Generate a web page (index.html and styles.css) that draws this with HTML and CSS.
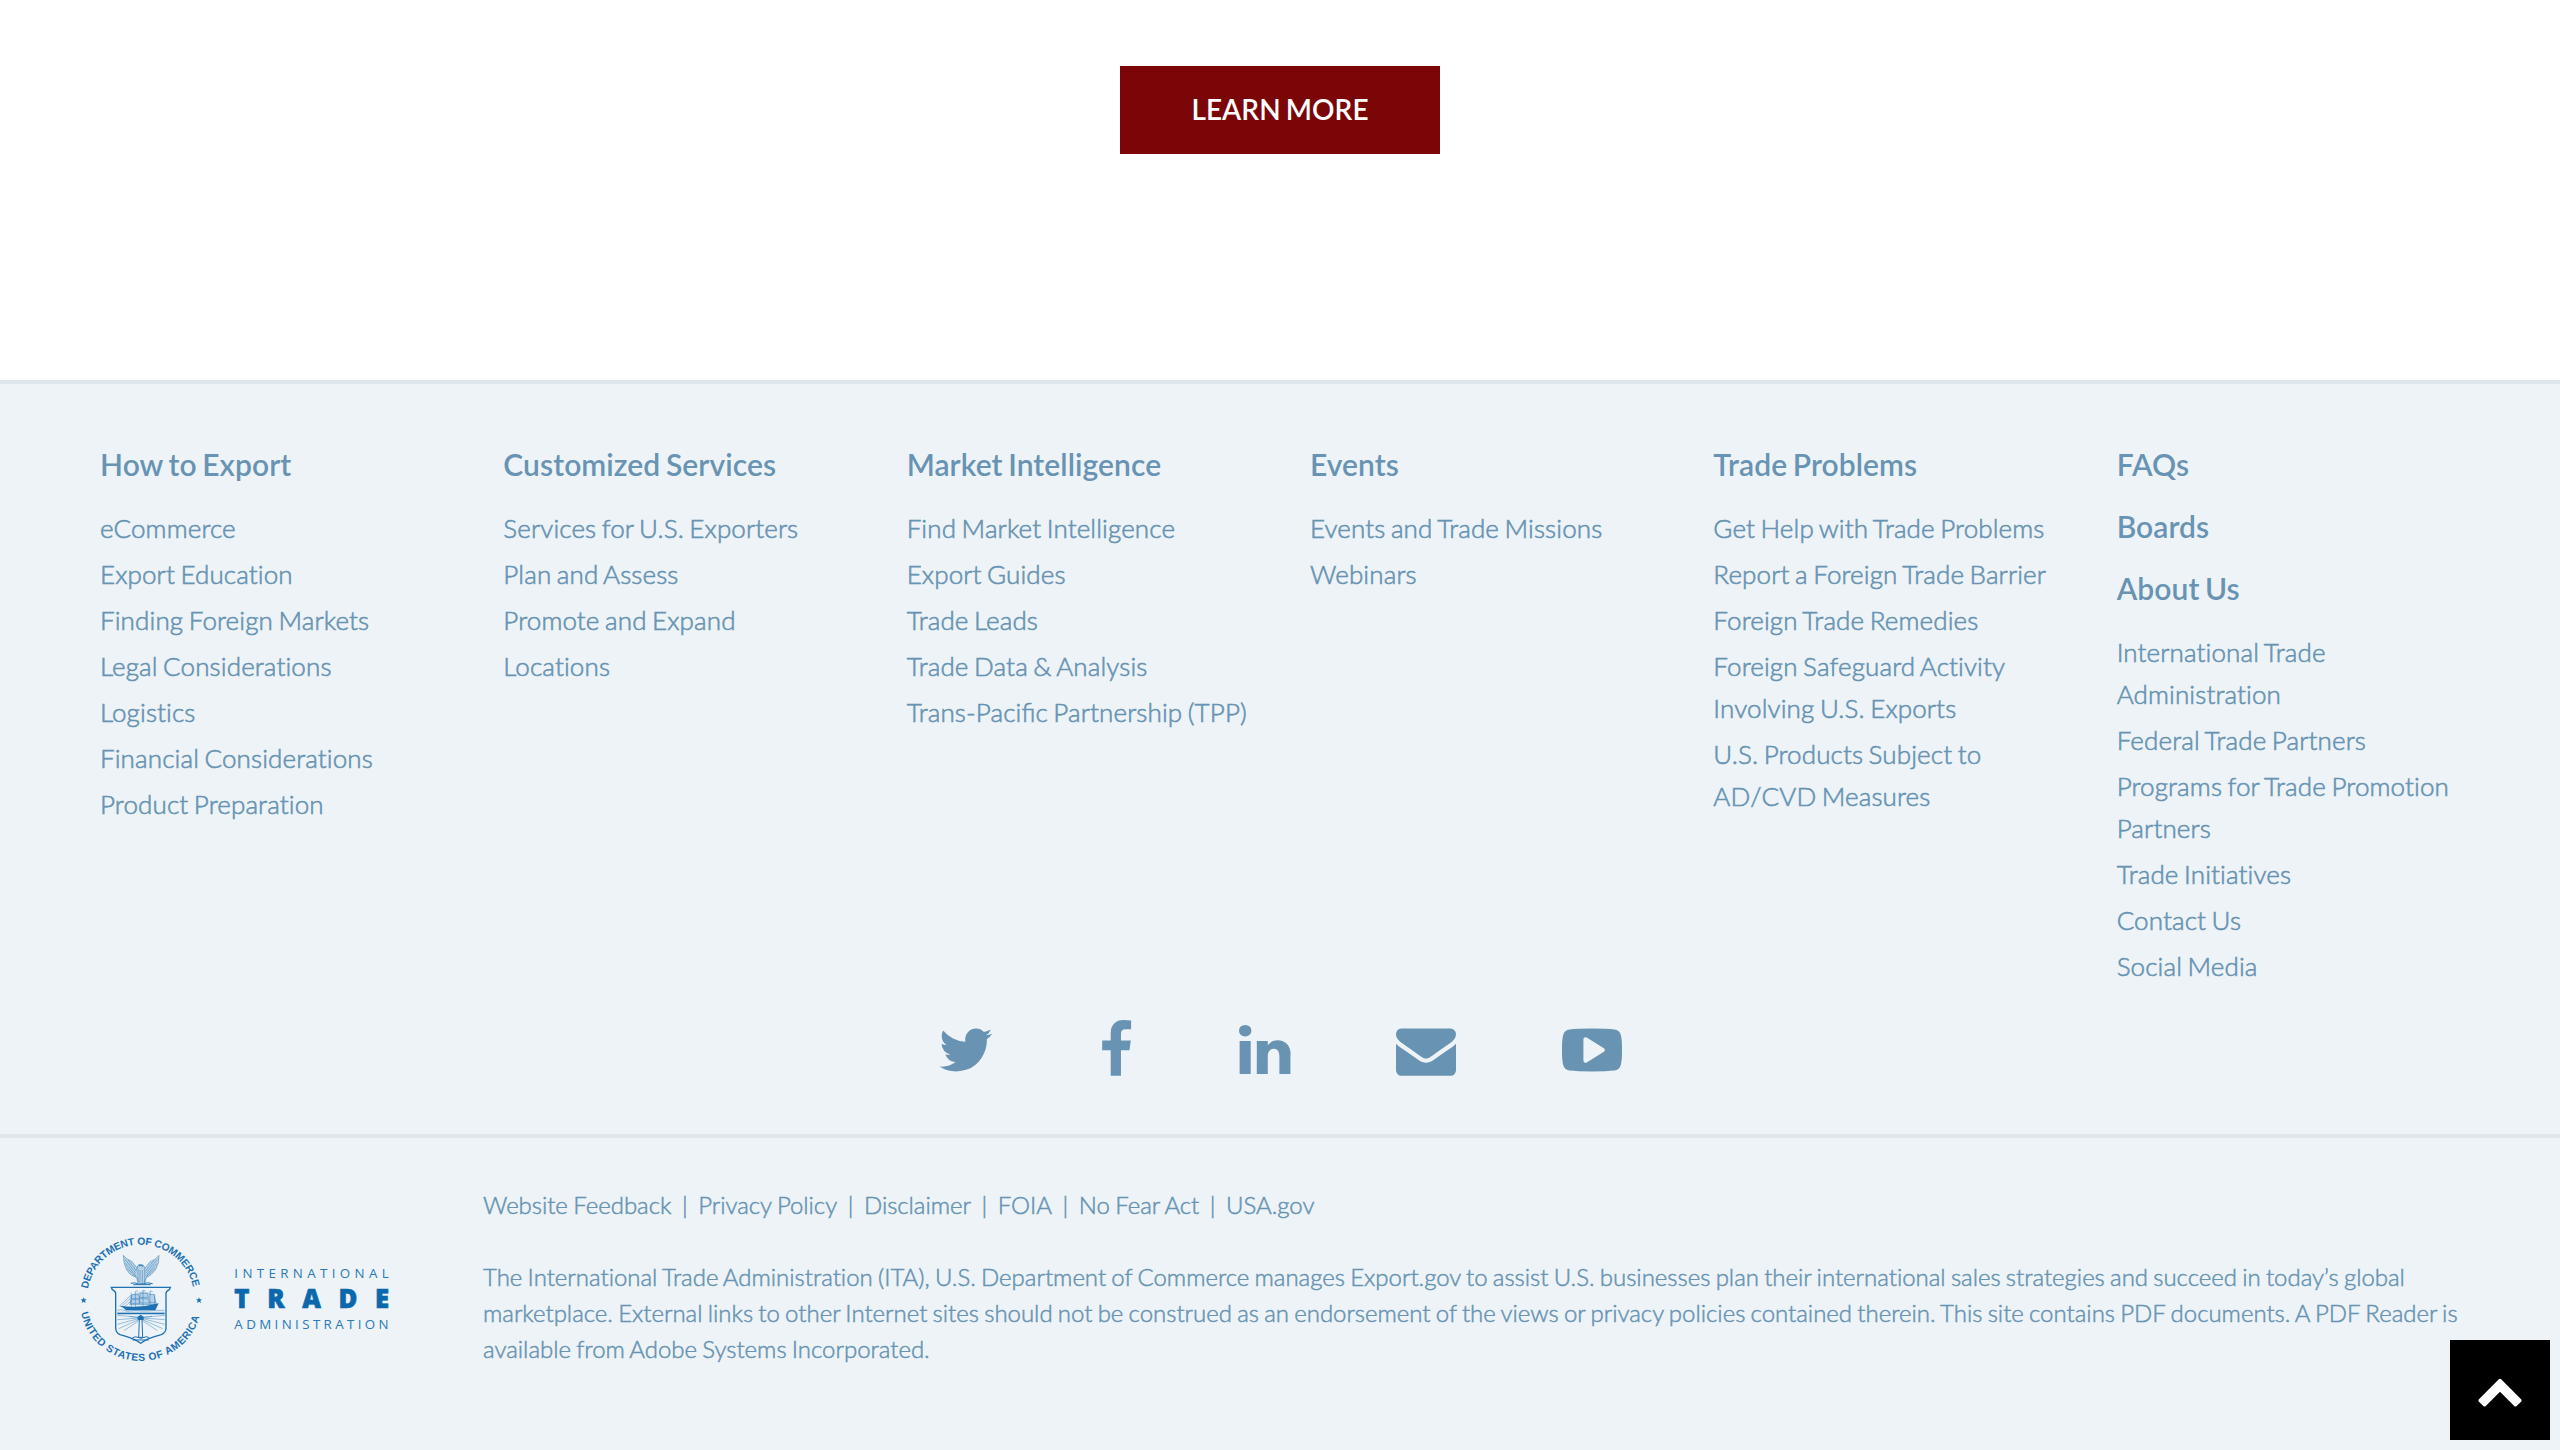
FILE: index.html
```html
<!DOCTYPE html>
<html lang="en">
<head>
<meta charset="utf-8">
<title>Export.gov</title>
<link rel="stylesheet" href="styles.css">
</head>
<body>
<main class="main">
  <a class="learn-more">LEARN MORE</a>
</main>
<footer class="footer">
  <section class="footer-top">
    <div class="columns">
      <div class="column">
        <h4>How to Export</h4>
        <ul><li>eCommerce</li><li>Export Education</li><li>Finding Foreign Markets</li><li>Legal Considerations</li><li>Logistics</li><li>Financial Considerations</li><li>Product Preparation</li></ul>
      </div>
      <div class="column">
        <h4>Customized Services</h4>
        <ul><li>Services for U.S. Exporters</li><li>Plan and Assess</li><li>Promote and Expand</li><li>Locations</li></ul>
      </div>
      <div class="column">
        <h4>Market Intelligence</h4>
        <ul><li>Find Market Intelligence</li><li>Export Guides</li><li>Trade Leads</li><li>Trade Data &amp; Analysis</li><li>Trans-Paci<span class="lig">fi</span>c Partnership (TPP)</li></ul>
      </div>
      <div class="column">
        <h4>Events</h4>
        <ul><li>Events and Trade Missions</li><li>Webinars</li></ul>
      </div>
      <div class="column">
        <h4>Trade Problems</h4>
        <ul><li>Get Help with Trade Problems</li><li>Report a Foreign Trade Barrier</li><li>Foreign Trade Remedies</li><li>Foreign Safeguard Activity Involving U.S. Exports</li><li>U.S. Products Subject to AD/CVD Measures</li></ul>
      </div>
      <div class="column">
        <h4>FAQs</h4>
        <h4>Boards</h4>
        <h4>About Us</h4>
        <ul><li>International Trade Administration</li><li>Federal Trade Partners</li><li>Programs for Trade Promotion Partners</li><li>Trade Initiatives</li><li>Contact Us</li><li>Social Media</li></ul>
      </div>
    </div>
    <div class="social">
      <svg viewBox="64 0 1664 1792"><path d="M1684 408q-67 98-162 167 1 14 1 42 0 130-38 259.5t-115.5 248.5-184.5 210.5-258 146-323 54.5q-271 0-496-145 35 4 78 4 225 0 401-138-105-2-188-64.5t-114-159.5q33 5 61 5 43 0 85-11-112-23-185.5-111.5t-73.5-205.5v-4q68 38 146 41-66-44-105-115t-39-154q0-88 44-163 121 149 294.5 238.5t371.5 99.5q-8-38-8-74 0-134 94.5-228.5t228.5-94.5q140 0 236 102 109-21 205-78-37 115-142 178 93-10 186-50z"/></svg>
      <svg viewBox="384 0 1024 1792"><path d="M1343 12v264h-157q-86 0-116 36t-30 108v189h293l-39 296h-254v759h-306v-759h-255v-296h255v-218q0-186 104-288.5t277-102.5q147 0 228 12z"/></svg>
      <svg viewBox="128 0 1536 1792"><path d="M477 625v991h-330v-991h330zm21-306q1 73-50.500 122t-135.500 49h-2q-82 0-132-49t-50-122q0-74 51.500-122.500t134.500-48.500 133 48.500 51 122.500zm1166 729v568h-329v-530q0-105-40.500-164.500t-126.500-59.500q-63 0-105.500 34.500t-63.500 85.500q-11 30-11 81v553h-329q2-399 2-647t-1-296l-1-48h329v144h-2q20-32 41-56t56.500-52 87-43.500 114.500-15.500q171 0 278 113.500t107 332.500z"/></svg>
      <svg viewBox="0 0 1792 1792"><path d="M1792 710v794q0 66-47 113t-113 47h-1472q-66 0-113-47t-47-113v-794q44 49 101 87 362 246 497 345 57 42 92.500 65.500t94.500 48 110 24.500h2q51 0 110-24.500t94.500-48 92.500-65.500q170-123 498-345 57-39 100-87zm0-294q0 79-49 151t-122 123q-376 261-468 325-10 7-42.500 31t-54 38.500-52 32.500-57.500 27-50 9h-2q-23 0-50-9t-57.500-27-52-32.500-54-38.500-42.500-31q-91-64-262-182.500t-205-142.500q-62-42-117-115.500t-55-136.500q0-78 41.500-130t118.500-52h1472q65 0 112.500 47t47.500 113z"/></svg>
      <svg viewBox="0 0 1792 1792"><path d="M1280 896q0-37-30-54l-512-320q-31-20-65-2-33 18-33 56v640q0 38 33 56 16 8 31 8 20 0 34-10l512-320q30-17 30-54zm512 0q0 96-1 150t-8.500 136.500-22.500 147.500q-16 73-69 123t-124 58q-222 25-671 25t-671-25q-71-8-124.500-58t-69.500-123q-14-65-21.500-147.500t-8.500-136.500-1-150 1-150 8.500-136.500 22.500-147.500q16-73 69-123t124-58q222-25 671-25t671 25q71 8 124.500 58t69.500 123q14 65 21.500 147.500t8.500 136.500 1 150z"/></svg>
    </div>
  </section>
  <section class="footer-bottom">
    <svg class="logo" viewBox="0 0 960 390">
      <defs>
        <path id="arc-top" d="M35.500 165A161 161 0 0 1 352.500 165"/>
        <path id="arc-bottom" d="M15 236A183 183 0 0 0 373 236"/>
      </defs>
      <g class="seal-text">
        <text textLength="443"><textPath href="#arc-top" textLength="443">DEPARTMENT OF COMMERCE</textPath></text>
        <text textLength="486"><textPath href="#arc-bottom" textLength="486">UNITED STATES OF AMERICA</textPath></text>
      </g>
      <path class="solid" d="M23 190l2.500 6h6.500l-5 4 2 7-6-4-6 4 2-7-5-4h6.500zM369 190l2.500 6h6.500l-5 4 2 7-6-4-6 4 2-7-5-4h6.500z"/>
      <!-- eagle -->
      <path class="tint" d="M142 64Q150 75 167 82L184 100Q184 90 194 90Q206 91 207 102L222 83Q240 77 249 64Q251 88 238 108Q226 124 212 132L210 147H183L181 132Q160 124 151 106Q142 88 142 64z"/>
      <path class="fine" d="M142 64Q150 75 167 82L184 104Q183 91 194 91Q206 92 206 104L222 83Q240 77 249 64Q251 88 238 108Q226 124 212 130M142 64Q142 88 151 106Q160 124 181 130M147 76L180 118M148 88L180 125M153 103L181 129M156 78L182 112M244 76L210 118M243 88L210 125M237 103L210 129M234 79L208 112M186 105V146M192 108V146M199 108V146M206 105V146M182 130L188 146M211 130L204 146M183 104L179 110"/>
      <path class="line" d="M164 148Q176 144 188 150L202 149Q214 144 230 149M172 152H224M188 96Q194 91 201 97"/>
      <!-- shield -->
      <path class="line bold" d="M106 160H283L280 167Q270 172 270 178V281Q270 296 256 302Q212 313 194 328Q176 313 132 302Q119 296 119 281V178Q119 172 109 167z"/>
      <path class="line bold" d="M124 239H266"/>
      <!-- ship -->
      <path class="tint" d="M162 184L180 177L196 172L216 175L234 182L244 212H160z"/>
      <path class="fine" d="M130 217L164 184M137 218L164 192M144 219L166 201M166 176V220M178 172V220M201 168V220M222 171V220M236 180V218M168 182H188L191 193H166zM165 197H190L193 208H163zM193 178H214L217 190H191zM190 194H217L220 207H190zM221 181H234L239 206H220M178 172L186 170M201 168L209 171M222 171L230 173M161 212H243"/>
      <path class="solid" d="M130 215Q190 224 248 208L238 229H150Q144 221 130 215z"/>
      <path class="fine" d="M124 229Q134 225 144 229T164 231T184 230T204 231T224 230T244 229T265 229M124 235H266"/>
      <!-- lighthouse -->
      <path class="fine" d="M187 250L124 244M187 252L124 257M187 254L124 271M188 257L128 284M190 259L144 290M201 250L266 244M201 252L266 257M201 254L266 271M200 257L260 284M198 259L244 290M160 247L187 250M228 247L201 250"/>
      <path class="solid" d="M185 248L194 242L203 248V258H185z"/>
      <path class="line" d="M190 258L188 310H200L198 258M166 315Q176 304 186 310T204 310T222 314M170 318H218"/>
      <g class="wordmark">
        <text x="475" y="133" textLength="463">INTERNATIONAL</text>
        <text class="heavy" x="475" y="221" textLength="464">TRADE</text>
        <text x="475" y="284" textLength="463">ADMINISTRATION</text>
      </g>
    </svg>
    <div class="legal">
      <nav><a>Website Feedback</a><span>|</span><a>Privacy Policy</a><span>|</span><a>Disclaimer</a><span>|</span><a>FOIA</a><span>|</span><a>No Fear Act</a><span>|</span><a>USA.gov</a></nav>
      <p>The International Trade Administration (ITA), U.S. Department of Commerce manages Export.gov to assist U.S. businesses plan their international sales strategies and succeed in today’s global marketplace. External links to other Internet sites should not be construed as an endorsement of the views or privacy policies contained therein. This site contains PDF documents. A PDF Reader is available from Adobe Systems Incorporated.</p>
    </div>
  </section>
</footer>
<a class="to-top"><svg viewBox="0 0 1792 1792"><path d="M1683 1331l-166 165q-19 19-45 19t-45-19l-531-531-531 531q-19 19-45 19t-45-19l-166-165q-19-19-19-45.500t19-45.500l742-741q19-19 45-19t45 19l742 741q19 19 19 45.500t-19 45.500z"/></svg></a>
</body>
</html>
```
FILE: styles.css
```css
* { box-sizing: border-box; }
body {
  margin: 0;
  height: 1450px;
  overflow: hidden;
  display: flex;
  flex-direction: column;
  background: #fff;
  color: #6893b3;
  font-family: Lato, "Liberation Sans", sans-serif;
  font-weight: 300;
  font-variant-ligatures: none;
}
.main {
  height: 380px;
  padding-top: 66px;
  display: flex;
  justify-content: center;
  align-items: flex-start;
}
.learn-more {
  width: 320px;
  height: 88px;
  background: #7b0608;
  color: #fff;
  font-size: 28px;
  font-weight: 600;
  line-height: 86px;
  letter-spacing: 0.05px;
  word-spacing: -2px;
  text-align: center;
}
.footer {
  flex: 1;
  background: #edf3f6;
}
.footer-top {
  height: 754px;
  border-top: 4px solid #dfe6ec;
  padding: 59px 70px 0;
}
.columns {
  display: grid;
  grid-template-columns: repeat(6, 1fr);
}
.column { padding: 0 27px 0 30px; }
h4 {
  margin: 0 0 20px;
  font-size: 30px;
  font-weight: 600;
  line-height: 42px;
  letter-spacing: 0.08px;
  word-spacing: -2px;
}
ul {
  margin: 0;
  padding: 0;
  list-style: none;
  font-size: 26px;
  line-height: 42px;
  letter-spacing: 0.12px;
  word-spacing: -1.7px;
  -webkit-text-stroke: 0.6px currentColor;
}
h4 + ul { margin-top: 21.500px; }
h4:has(+ ul) { margin-bottom: 0; }
li { margin-bottom: 4px; }
.lig { font-variant-ligatures: common-ligatures; letter-spacing: 0; }
.social {
  display: flex;
  justify-content: center;
  gap: 105.700px;
  padding-top: 29.500px;
}
.social svg {
  height: 60px;
  fill: currentColor;
}
.footer-bottom {
  border-top: 4px solid #dfe6ec;
  display: flex;
  align-items: flex-start;
  padding: 49px 0 0 76px;
}
.logo {
  width: 320px;
  height: 130px;
  margin: 47px 87px 0 0;
  flex: none;
}
.seal-text {
  font: bold 31px "Liberation Sans", Arial, sans-serif;
  fill: #1d71b3;
}
.wordmark {
  font: 400 40px "Open Sans", sans-serif;
  fill: #2b79b6;
}
.heavy {
  font-size: 77px;
  font-weight: 800;
  fill: #0c68ad;
  stroke: #0c68ad;
  stroke-width: 2;
}
.solid { fill: #1d71b3; }
.tint { fill: #1d71b3; opacity: .25; }
.line, .fine { fill: none; stroke: #1d71b3; stroke-width: 3; }
.fine { stroke-width: 1.600; opacity: .8; }
.bold { stroke-width: 4; }
.legal {
  width: 1985px;
  font-size: 24px;
  line-height: 36px;
  -webkit-text-stroke: 0.5px currentColor;
}
nav { display: flex; gap: 10.600px; letter-spacing: -0.050px; word-spacing: -1px; }
p { margin: 36px 0 0; letter-spacing: -0.020px; word-spacing: -1.25px; }
.to-top {
  position: fixed;
  right: 10px;
  bottom: 10px;
  width: 100px;
  height: 100px;
  padding-top: 26px;
  display: flex;
  justify-content: center;
  background: #000;
}
.to-top svg { width: 48px; height: 48px; fill: #fff; }
```
